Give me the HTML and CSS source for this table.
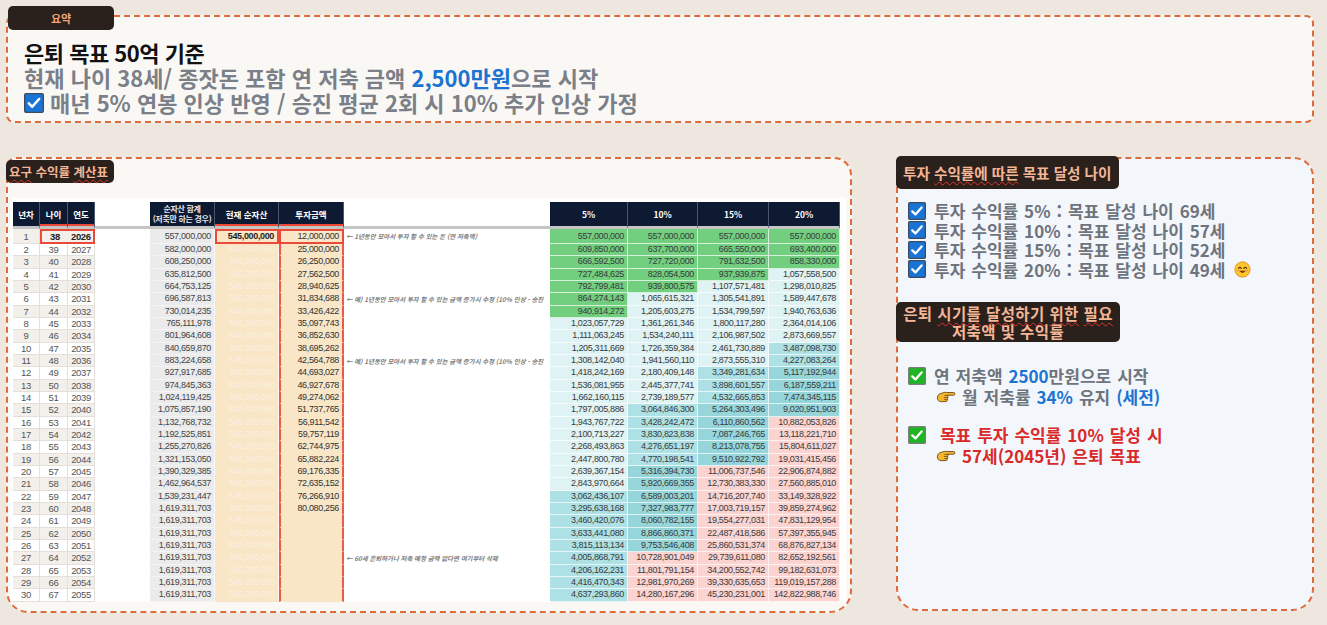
FILE: index.html
```html
<!DOCTYPE html>
<html lang="ko">
<head>
<meta charset="utf-8">
<title>은퇴 목표 요구 수익률</title>
<link rel="stylesheet" href="styles.css">
</head>
<body>
<svg class="defs" width="0" height="0" aria-hidden="true">
  <defs>
    <symbol id="chk-blue" viewBox="0 0 18 18">
      <rect x="0.6" y="0.6" width="16.8" height="16.8" rx="1.2" fill="#1a74d6" stroke="#3d4b60" stroke-width="1.2"/>
      <path d="M4.3 9.4 L7.4 12.4 L13.6 5.4" fill="none" stroke="#fff" stroke-width="2.3" stroke-linecap="round" stroke-linejoin="round"/>
    </symbol>
    <symbol id="chk-green" viewBox="0 0 18 18">
      <rect x="0.6" y="0.6" width="16.8" height="16.8" rx="1" fill="#1fb424" stroke="#7d7d7d" stroke-width="1.2"/>
      <path d="M4.3 9.4 L7.4 12.4 L13.6 5.4" fill="none" stroke="#fff" stroke-width="2.3" stroke-linecap="round" stroke-linejoin="round"/>
    </symbol>
    <symbol id="hand" viewBox="0 0 22 16">
      <path d="M1.5 9.5 C1.5 6.8 3 5.2 5.5 4.6 L9 3.6 C10 3.3 10.8 3.3 11.5 3.6 L19.4 3.6 C21.2 3.6 21.2 6.6 19.4 6.6 L12.6 6.6 C13.6 7.1 13.6 8.7 12.6 9.1 C13.4 9.6 13.3 11.1 12.3 11.4 C12.9 12.1 12.4 13.5 11.2 13.5 L6 13.7 C3.4 13.9 1.5 12.2 1.5 9.5 Z" fill="#f6b52c" stroke="#5d3f0e" stroke-width="0.9" stroke-linejoin="round"/>
      <path d="M12.6 9.1 L9.2 9.1 M12.3 11.4 L9.4 11.4 M12.6 6.6 L9.6 6.9" fill="none" stroke="#5d3f0e" stroke-width="0.8" stroke-linecap="round"/>
    </symbol>
  </defs>
</svg>

<div class="page">
  <section class="summary">
    <div class="tag tag-summary">요약</div>
    <p class="s-title">은퇴 목표 50억 기준</p>
    <p class="s-line">현재 나이 38세/ 종잣돈 포함 연 저축 금액 <span class="blue">2,500만원</span>으로 시작</p>
    <p class="s-line s-check"><svg class="ico-top"><use href="#chk-blue"/></svg><span>매년 5% 연봉 인상 반영 / 승진 평균 2회 시 10% 추가 인상 가정</span></p>
  </section>

  <div class="lower">
    <section class="calc">
      <div class="tag tag-calc"><span class="spell">요구</span> 수익률 <span class="spell">계산표</span></div>
      <div class="sheet">
        <table class="grid">
          <colgroup>
            <col style="width:27px"><col style="width:28px"><col style="width:27px"><col style="width:55px">
            <col style="width:65px"><col style="width:64px"><col style="width:65px"><col style="width:206px">
            <col style="width:78px"><col style="width:70px"><col style="width:71px"><col style="width:71px">
          </colgroup>
          <thead>
            <tr>
              <th>년차</th><th class="red">나이</th><th class="red">연도</th><th class="blank"></th>
              <th class="two">순자산 합계<br>(저축만 하는 경우)</th><th class="red">현재 순자산</th><th class="red">투자금액</th><th class="blank"></th>
              <th>5%</th><th>10%</th><th>15%</th><th>20%</th>
            </tr>
          </thead>
          <tbody>
            <tr class="first"><td class="lc n">1</td><td class="lc a">38</td><td class="lc y">2026</td><td class="gap"></td><td class="tot">557,000,000</td><td class="cur">545,000,000</td><td class="inv">12,000,000</td><td class="note">← 1년동안 모아서 투자 할 수 있는 돈 (연 저축액)</td><td class="g">557,000,000</td><td class="g">557,000,000</td><td class="g">557,000,000</td><td class="g">557,000,000</td></tr>
            <tr><td class="lc n">2</td><td class="lc a">39</td><td class="lc y">2027</td><td class="gap"></td><td class="tot">582,000,000</td><td class="cur">545,000,000</td><td class="inv">25,000,000</td><td class="note"></td><td class="g">609,850,000</td><td class="g">637,700,000</td><td class="g">665,550,000</td><td class="g">693,400,000</td></tr>
            <tr><td class="lc n">3</td><td class="lc a">40</td><td class="lc y">2028</td><td class="gap"></td><td class="tot">608,250,000</td><td class="cur">545,000,000</td><td class="inv">26,250,000</td><td class="note"></td><td class="g">666,592,500</td><td class="g">727,720,000</td><td class="g">791,632,500</td><td class="g">858,330,000</td></tr>
            <tr><td class="lc n">4</td><td class="lc a">41</td><td class="lc y">2029</td><td class="gap"></td><td class="tot">635,812,500</td><td class="cur">545,000,000</td><td class="inv">27,562,500</td><td class="note"></td><td class="g">727,484,625</td><td class="g">828,054,500</td><td class="g">937,939,875</td><td class="c1">1,057,558,500</td></tr>
            <tr><td class="lc n">5</td><td class="lc a">42</td><td class="lc y">2030</td><td class="gap"></td><td class="tot">664,753,125</td><td class="cur">545,000,000</td><td class="inv">28,940,625</td><td class="note"></td><td class="g">792,799,481</td><td class="g">939,800,575</td><td class="c1">1,107,571,481</td><td class="c1">1,298,010,825</td></tr>
            <tr><td class="lc n">6</td><td class="lc a">43</td><td class="lc y">2031</td><td class="gap"></td><td class="tot">696,587,813</td><td class="cur">545,000,000</td><td class="inv">31,834,688</td><td class="note">← 예) 1년동안 모아서 투자 할 수 있는 금액 증가시 수정 (10% 인상 - 승진</td><td class="g">864,274,143</td><td class="c1">1,065,615,321</td><td class="c1">1,305,541,891</td><td class="c1">1,589,447,678</td></tr>
            <tr><td class="lc n">7</td><td class="lc a">44</td><td class="lc y">2032</td><td class="gap"></td><td class="tot">730,014,235</td><td class="cur">545,000,000</td><td class="inv">33,426,422</td><td class="note"></td><td class="g">940,914,272</td><td class="c1">1,205,603,275</td><td class="c1">1,534,799,597</td><td class="c1">1,940,763,636</td></tr>
            <tr><td class="lc n">8</td><td class="lc a">45</td><td class="lc y">2033</td><td class="gap"></td><td class="tot">765,111,978</td><td class="cur">545,000,000</td><td class="inv">35,097,743</td><td class="note"></td><td class="c1">1,023,057,729</td><td class="c1">1,361,261,346</td><td class="c1">1,800,117,280</td><td class="c1">2,364,014,106</td></tr>
            <tr><td class="lc n">9</td><td class="lc a">46</td><td class="lc y">2034</td><td class="gap"></td><td class="tot">801,964,608</td><td class="cur">545,000,000</td><td class="inv">36,852,630</td><td class="note"></td><td class="c1">1,111,063,245</td><td class="c1">1,534,240,111</td><td class="c1">2,106,987,502</td><td class="c1">2,873,669,557</td></tr>
            <tr><td class="lc n">10</td><td class="lc a">47</td><td class="lc y">2035</td><td class="gap"></td><td class="tot">840,659,870</td><td class="cur">545,000,000</td><td class="inv">38,695,262</td><td class="note"></td><td class="c1">1,205,311,669</td><td class="c1">1,726,359,384</td><td class="c1">2,461,730,889</td><td class="c2">3,487,098,730</td></tr>
            <tr><td class="lc n">11</td><td class="lc a">48</td><td class="lc y">2036</td><td class="gap"></td><td class="tot">883,224,658</td><td class="cur">545,000,000</td><td class="inv">42,564,788</td><td class="note">← 예) 1년동안 모아서 투자 할 수 있는 금액 증가시 수정 (10% 인상 - 승진</td><td class="c1">1,308,142,040</td><td class="c1">1,941,560,110</td><td class="c1">2,873,555,310</td><td class="c2">4,227,083,264</td></tr>
            <tr><td class="lc n">12</td><td class="lc a">49</td><td class="lc y">2037</td><td class="gap"></td><td class="tot">927,917,685</td><td class="cur">545,000,000</td><td class="inv">44,693,027</td><td class="note"></td><td class="c1">1,418,242,169</td><td class="c1">2,180,409,148</td><td class="c2">3,349,281,634</td><td class="c3">5,117,192,944</td></tr>
            <tr><td class="lc n">13</td><td class="lc a">50</td><td class="lc y">2038</td><td class="gap"></td><td class="tot">974,845,363</td><td class="cur">545,000,000</td><td class="inv">46,927,678</td><td class="note"></td><td class="c1">1,536,081,955</td><td class="c1">2,445,377,741</td><td class="c2">3,898,601,557</td><td class="c3">6,187,559,211</td></tr>
            <tr><td class="lc n">14</td><td class="lc a">51</td><td class="lc y">2039</td><td class="gap"></td><td class="tot">1,024,119,425</td><td class="cur">545,000,000</td><td class="inv">49,274,062</td><td class="note"></td><td class="c1">1,662,160,115</td><td class="c1">2,739,189,577</td><td class="c2">4,532,665,853</td><td class="c3">7,474,345,115</td></tr>
            <tr><td class="lc n">15</td><td class="lc a">52</td><td class="lc y">2040</td><td class="gap"></td><td class="tot">1,075,857,190</td><td class="cur">545,000,000</td><td class="inv">51,737,765</td><td class="note"></td><td class="c1">1,797,005,886</td><td class="c2">3,064,846,300</td><td class="c3">5,264,303,496</td><td class="c3">9,020,951,903</td></tr>
            <tr><td class="lc n">16</td><td class="lc a">53</td><td class="lc y">2041</td><td class="gap"></td><td class="tot">1,132,768,732</td><td class="cur">545,000,000</td><td class="inv">56,911,542</td><td class="note"></td><td class="c1">1,943,767,722</td><td class="c2">3,428,242,472</td><td class="c3">6,110,860,562</td><td class="p">10,882,053,826</td></tr>
            <tr><td class="lc n">17</td><td class="lc a">54</td><td class="lc y">2042</td><td class="gap"></td><td class="tot">1,192,525,851</td><td class="cur">545,000,000</td><td class="inv">59,757,119</td><td class="note"></td><td class="c1">2,100,713,227</td><td class="c2">3,830,823,838</td><td class="c3">7,087,246,765</td><td class="p">13,118,221,710</td></tr>
            <tr><td class="lc n">18</td><td class="lc a">55</td><td class="lc y">2043</td><td class="gap"></td><td class="tot">1,255,270,826</td><td class="cur">545,000,000</td><td class="inv">62,744,975</td><td class="note"></td><td class="c1">2,268,493,863</td><td class="c2">4,276,651,197</td><td class="c3">8,213,078,755</td><td class="p">15,804,611,027</td></tr>
            <tr><td class="lc n">19</td><td class="lc a">56</td><td class="lc y">2044</td><td class="gap"></td><td class="tot">1,321,153,050</td><td class="cur">545,000,000</td><td class="inv">65,882,224</td><td class="note"></td><td class="c1">2,447,800,780</td><td class="c2">4,770,198,541</td><td class="c3">9,510,922,792</td><td class="p">19,031,415,456</td></tr>
            <tr><td class="lc n">20</td><td class="lc a">57</td><td class="lc y">2045</td><td class="gap"></td><td class="tot">1,390,329,385</td><td class="cur">545,000,000</td><td class="inv">69,176,335</td><td class="note"></td><td class="c1">2,639,367,154</td><td class="c3">5,316,394,730</td><td class="p">11,006,737,546</td><td class="p">22,906,874,882</td></tr>
            <tr><td class="lc n">21</td><td class="lc a">58</td><td class="lc y">2046</td><td class="gap"></td><td class="tot">1,462,964,537</td><td class="cur">545,000,000</td><td class="inv">72,635,152</td><td class="note"></td><td class="c1">2,843,970,664</td><td class="c3">5,920,669,355</td><td class="p">12,730,383,330</td><td class="p">27,560,885,010</td></tr>
            <tr><td class="lc n">22</td><td class="lc a">59</td><td class="lc y">2047</td><td class="gap"></td><td class="tot">1,539,231,447</td><td class="cur">545,000,000</td><td class="inv">76,266,910</td><td class="note"></td><td class="c2">3,062,436,107</td><td class="c3">6,589,003,201</td><td class="p">14,716,207,740</td><td class="p">33,149,328,922</td></tr>
            <tr><td class="lc n">23</td><td class="lc a">60</td><td class="lc y">2048</td><td class="gap"></td><td class="tot">1,619,311,703</td><td class="cur">545,000,000</td><td class="inv">80,080,256</td><td class="note"></td><td class="c2">3,295,638,168</td><td class="c3">7,327,983,777</td><td class="p">17,003,719,157</td><td class="p">39,859,274,962</td></tr>
            <tr><td class="lc n">24</td><td class="lc a">61</td><td class="lc y">2049</td><td class="gap"></td><td class="tot">1,619,311,703</td><td class="cur">545,000,000</td><td class="inv"></td><td class="note"></td><td class="c2">3,460,420,076</td><td class="c3">8,060,782,155</td><td class="p">19,554,277,031</td><td class="p">47,831,129,954</td></tr>
            <tr><td class="lc n">25</td><td class="lc a">62</td><td class="lc y">2050</td><td class="gap"></td><td class="tot">1,619,311,703</td><td class="cur">545,000,000</td><td class="inv"></td><td class="note"></td><td class="c2">3,633,441,080</td><td class="c3">8,866,860,371</td><td class="p">22,487,418,586</td><td class="p">57,397,355,945</td></tr>
            <tr><td class="lc n">26</td><td class="lc a">63</td><td class="lc y">2051</td><td class="gap"></td><td class="tot">1,619,311,703</td><td class="cur">545,000,000</td><td class="inv"></td><td class="note"></td><td class="c2">3,815,113,134</td><td class="c3">9,753,546,408</td><td class="p">25,860,531,374</td><td class="p">68,876,827,134</td></tr>
            <tr><td class="lc n">27</td><td class="lc a">64</td><td class="lc y">2052</td><td class="gap"></td><td class="tot">1,619,311,703</td><td class="cur">545,000,000</td><td class="inv"></td><td class="note">← 60세 은퇴하거나 저축 예정 금액 없다면 여기부터 삭제</td><td class="c2">4,005,868,791</td><td class="p">10,728,901,049</td><td class="p">29,739,611,080</td><td class="p">82,652,192,561</td></tr>
            <tr><td class="lc n">28</td><td class="lc a">65</td><td class="lc y">2053</td><td class="gap"></td><td class="tot">1,619,311,703</td><td class="cur">545,000,000</td><td class="inv"></td><td class="note"></td><td class="c2">4,206,162,231</td><td class="p">11,801,791,154</td><td class="p">34,200,552,742</td><td class="p">99,182,631,073</td></tr>
            <tr><td class="lc n">29</td><td class="lc a">66</td><td class="lc y">2054</td><td class="gap"></td><td class="tot">1,619,311,703</td><td class="cur">545,000,000</td><td class="inv"></td><td class="note"></td><td class="c2">4,416,470,343</td><td class="p">12,981,970,269</td><td class="p">39,330,635,653</td><td class="p">119,019,157,288</td></tr>
            <tr><td class="lc n">30</td><td class="lc a">67</td><td class="lc y">2055</td><td class="gap"></td><td class="tot">1,619,311,703</td><td class="cur">545,000,000</td><td class="inv"></td><td class="note"></td><td class="c2">4,637,293,860</td><td class="p">14,280,167,296</td><td class="p">45,230,231,001</td><td class="p">142,822,988,746</td></tr>
          </tbody>
        </table>
      </div>
    </section>

    <section class="goal">
      <div class="tag tag-goal">투자 <span class="spell">수익률에 따른</span> 목표 달성 나이</div>
      <ul class="ages">
        <li><svg class="ico"><use href="#chk-blue"/></svg><span class="tx">투자 수익률 5% : 목표 달성 나이 69세</span></li>
        <li><svg class="ico"><use href="#chk-blue"/></svg><span class="tx">투자 수익률 10% : 목표 달성 나이 57세</span></li>
        <li><svg class="ico"><use href="#chk-blue"/></svg><span class="tx">투자 수익률 15% : 목표 달성 나이 52세</span></li>
        <li><svg class="ico"><use href="#chk-blue"/></svg><span class="tx">투자 수익률 20% : 목표 달성 나이 49세</span>
          <svg class="smile" viewBox="0 0 20 20"><circle cx="10" cy="10" r="9" fill="#fcc62c" stroke="#e0891c" stroke-width="1"/><path d="M5.2 8.6 Q6.9 6.4 8.6 8.6 M11.4 8.6 Q13.1 6.4 14.8 8.6" fill="none" stroke="#5a3a10" stroke-width="1.3" stroke-linecap="round"/><path d="M6 11.6 Q10 16.4 14 11.6 Z" fill="#7a3410"/><ellipse cx="4.7" cy="11.2" rx="1.6" ry="1" fill="#f5946a"/><ellipse cx="15.3" cy="11.2" rx="1.6" ry="1" fill="#f5946a"/></svg>
        </li>
      </ul>
      <div class="tag tag-need"><span>은퇴 <span class="spell">시기를</span> <span class="spell">달성하기</span> <span class="spell">위한</span> <span class="spell">필요</span></span><br>저축액 및 수익률</div>
      <div class="plan">
        <p class="pl"><svg class="ico"><use href="#chk-green"/></svg><span class="tx">연 저축액 <b class="blue">2500</b>만원으로 시작</span></p>
        <p class="pl sub"><svg class="hand"><use href="#hand"/></svg><span class="tx">월 저축률 <b class="blue">34%</b> 유지 <b class="blue">(세전)</b></span></p>
        <p class="pl red gap-top"><svg class="ico"><use href="#chk-green"/></svg><span class="tx">&nbsp;목표 투자 수익률 10% 달성 시</span></p>
        <p class="pl sub red"><svg class="hand"><use href="#hand"/></svg><span class="tx">57세(2045년) 은퇴 목표</span></p>
      </div>
    </section>
  </div>
</div>
</body>
</html>
```

FILE: styles.css
```css
* { box-sizing: border-box; }
html, body { margin: 0; padding: 0; }
body {
  width: 1327px;
  height: 625px;
  overflow: hidden;
  background: #ede7e0;
  font-family: "Noto Sans CJK KR", "Noto Sans", sans-serif;
}
.defs { position: absolute; width: 0; height: 0; overflow: hidden; }

.page { padding: 15px 13px 0 6px; }

/* dark labels */
.tag {
  background: #2a201c;
  color: #f4b696;
  font-weight: 700;
  border-radius: 5px;
}
.spell {
  text-decoration: underline wavy #e2332c;
  text-decoration-thickness: 1px;
  text-underline-offset: 2px;
  text-decoration-skip-ink: none;
}

/* summary */
.summary {
  height: 108px;
  border: 2px dashed #df6a3a;
  border-radius: 8px;
  background: #faf8f5;
}
.tag-summary {
  width: 106px;
  height: 24px;
  margin-top: -11px;
  font-size: 11px;
  line-height: 24px;
  text-align: center;
  color: #f2a678;
}
.summary p {
  margin: 0 0 0 16px;
  height: 25px;
  line-height: 25px;
  font-size: 22px;
  font-weight: 700;
  letter-spacing: 0;
  white-space: nowrap;
}
.summary .s-title { margin-top: 10px; color: #111; letter-spacing: -0.5px; }
.summary .s-line { color: #7a7f88; }
.blue { color: #1b74d1; }
.s-check { display: flex; align-items: center; }
.ico-top { width: 20px; height: 20px; margin-right: 6px; flex: none; }

/* lower area */
.lower {
  display: flex;
  align-items: flex-start;
  gap: 44px;
  margin-top: 34px;
}

.calc {
  width: 846px;
  height: 456px;
  border: 2px dashed #df6a3a;
  border-radius: 10px 18px 22px 22px;
  background: #faf8f5;
}
.tag-calc {
  width: 108px;
  height: 23px;
  margin: 1px 0 0 -2px;
  font-size: 12.5px;
  line-height: 23px;
  padding-left: 3px;
  white-space: nowrap;
  color: #f4b696;
}
.sheet {
  width: 836px;
  height: 403px;
  margin: 15px 0 0 2px;
  padding: 4px 0 0 3px;
  background: #fff;
}

table.grid {
  border-collapse: separate;
  border-spacing: 0;
  table-layout: fixed;
  width: 827px;
}
.grid th {
  height: 27px;
  padding: 0;
  background: #0e1a32;
  color: #fff;
  font-size: 8.5px;
  font-weight: 700;
  line-height: 10px;
  border-bottom: 3px solid #c5c5c5;
  border-right: 1px solid #4a5670;
  white-space: nowrap;
}
.grid th.two { font-size: 8px; letter-spacing: -0.3px; color: #e4e6ea; }
.grid th.blank { background: #fff; border-right: 0; }
.grid th.red { box-shadow: inset 0 -2px 0 #ec4a39; }

.grid td {
  height: 12.33px;
  padding: 0 3px;
  font-family: "Liberation Sans", Arial, sans-serif;
  font-size: 9px;
  letter-spacing: -0.35px;
  line-height: 11px;
  color: #3a3a3a;
  text-align: right;
  white-space: nowrap;
  overflow: hidden;
  border-bottom: 1px solid rgba(255, 255, 255, 0.7);
  border-right: 1px solid rgba(255, 255, 255, 0.7);
}

.grid td.lc {
  text-align: center;
  font-size: 9.5px;
  color: #555;
  background: #fff;
  border-bottom: 1px solid #e4dfd8;
  border-right: 1px solid #e4dfd8;
}
.grid tbody tr:nth-child(odd) td.lc { background: #f3f0ec; }
.grid tr.first td.n { background: #ebebeb; }
.grid tr.first td.a,
.grid tr.first td.y {
  background: #f8e5c6;
  font-weight: 700;
  color: #222;
  border-top: 2px solid #ec4a39;
  border-bottom: 2px solid #ec4a39;
  border-right: 0;
}
.grid tr.first td.a { border-left: 2px solid #ec4a39; }
.grid tr.first td.y { border-right: 2px solid #ec4a39; }

.grid td.gap { background: #fff; border: 0; }
.grid td.tot { background: #ebebeb; color: #444; border-bottom-color: #f4f4f4; }
.grid td.cur { background: #f8e6c7; color: #fcf0de; border-bottom-color: #f8e6c7; }
.grid tr.first td.cur {
  color: #1e1e1e;
  font-weight: 700;
  border: 2px solid #ec4a39;
}
.grid td.inv {
  background: #f8e6c7;
  color: #333;
  border-left: 2px solid #ec5a48;
  border-right: 2px solid #ec5a48;
  border-bottom-color: #f8e6c7;
}
.grid tr.first td.inv { border: 2px solid #ec4a39; }

.grid td.note {
  background: #fff;
  border: 0;
  padding: 0 0 0 2px;
  text-align: left;
  font-family: "Noto Sans CJK KR", sans-serif;
  font-size: 6.4px;
  font-style: italic;
  font-weight: 700;
  letter-spacing: 0;
  color: #7d7d7d;
}

.grid td.g  { background: #72cf80; }
.grid td.c1 { background: #dff2f4; }
.grid td.c2 { background: #ade1e5; }
.grid td.c3 { background: #96d6db; }
.grid td.p  { background: #fbd4d1; }

/* right panel */
.goal {
  width: 418px;
  height: 454px;
  border: 2px dashed #df6a3a;
  border-radius: 10px 20px 22px 22px;
  background: #f3f6fa;
}
.tag-goal {
  width: 223px;
  height: 33px;
  margin: -3px 0 0 -2px;
  padding-left: 7px;
  font-size: 14.6px;
  line-height: 33px;
  white-space: nowrap;
}
.ages {
  list-style: none;
  margin: 12px 0 0 10px;
  padding: 0;
}
.ages li,
.pl {
  display: flex;
  align-items: center;
  height: 19.5px;
  line-height: 19.5px;
  font-size: 17px;
  font-weight: 700;
  color: #6e747d;
  white-space: nowrap;
  word-spacing: 1.2px;
}
.ico { width: 18px; height: 18px; flex: none; margin-right: 8px; }
.smile { width: 17px; height: 17px; margin-left: 9px; flex: none; }

.tag-need {
  width: 224px;
  height: 40px;
  margin: 23px 0 0 -2px;
  padding-top: 2px;
  font-size: 15.5px;
  line-height: 18px;
  text-align: center;
  white-space: nowrap;
  letter-spacing: 0.4px;
}
.plan { margin: 23px 0 0 10px; }
.pl { margin: 0; height: 21px; line-height: 21px; }
.pl b { font-weight: 700; }
.pl.sub { padding-left: 28px; }
.hand { width: 20px; height: 15px; flex: none; margin-right: 6px; }
.pl.red { color: #d92a2a; }
.gap-top { margin-top: 17px !important; }
```
